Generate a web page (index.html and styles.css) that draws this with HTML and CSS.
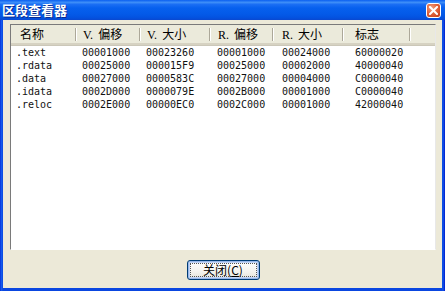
FILE: index.html
```html
<!DOCTYPE html>
<html lang="zh-CN">
<head>
<meta charset="utf-8">
<link rel="stylesheet" href="styles.css">
</head>
<body>
<div class="window">
  <div class="titlebar">
    <span class="title">区段查看器</span>
    <span class="close-btn"><svg width="9" height="9" viewBox="0 0 9 9"><path d="M1 1 L8 8 M8 1 L1 8" stroke="#fff" stroke-width="2" stroke-linecap="square"/></svg></span>
  </div>
  <div class="client">
    <div class="listview">
      <div class="header">
        <div class="hcell c1">名称</div>
        <div class="hcell"><span class="lat">V. </span>偏移</div>
        <div class="hcell"><span class="lat">V. </span>大小</div>
        <div class="hcell c4"><span class="lat">R. </span>偏移</div>
        <div class="hcell c5"><span class="lat">R. </span>大小</div>
        <div class="hcell c6">标志</div>
        <div class="hcell last"></div>
      </div>
      <div class="rows">
        <div class="row"><span class="c1">.text</span><span>00001000</span><span>00023260</span><span class="c4">00001000</span><span class="c5">00024000</span><span class="c6">60000020</span></div>
        <div class="row"><span class="c1">.rdata</span><span>00025000</span><span>000015F9</span><span class="c4">00025000</span><span class="c5">00002000</span><span class="c6">40000040</span></div>
        <div class="row"><span class="c1">.data</span><span>00027000</span><span>0000583C</span><span class="c4">00027000</span><span class="c5">00004000</span><span class="c6">C0000040</span></div>
        <div class="row"><span class="c1">.idata</span><span>0002D000</span><span>0000079E</span><span class="c4">0002B000</span><span class="c5">00001000</span><span class="c6">C0000040</span></div>
        <div class="row"><span class="c1">.reloc</span><span>0002E000</span><span>00000EC0</span><span class="c4">0002C000</span><span class="c5">00001000</span><span class="c6">42000040</span></div>
      </div>
    </div>
    <div class="footer">
      <button class="btn"><span class="focus">关闭(<u>C</u>)</span></button>
    </div>
  </div>
</div>
</body>
</html>
```
FILE: styles.css
```css
* { box-sizing: border-box; }
html, body { margin: 0; padding: 0; }
body { width: 445px; height: 291px; overflow: hidden; background: #fff; }

.window {
  width: 445px;
  height: 291px;
  display: flex;
  flex-direction: column;
  background: linear-gradient(to right, #0019cf 0, #1660f0 1px, #0a46e0 3px, #0a46e0 442px, #1258e8 443px, #0019cf 445px);
  padding: 0 3px 3px 3px;
}

.titlebar {
  height: 20px;
  margin: 0 -3px;
  padding: 0 4px 0 2px;
  display: flex;
  align-items: center;
  justify-content: space-between;
  background: linear-gradient(to bottom, #0a5ff0 0%, #3d8ef8 12%, #1a6ef4 22%, #0660ee 40%, #045ae8 70%, #0352e0 88%, #0a48d0 100%);
}

.title {
  color: #fff;
  font-family: "Noto Sans CJK SC", sans-serif;
  font-weight: bold;
  font-size: 13px;
  line-height: 20px;
  text-shadow: 1px 1px 0 #0a2a90;
}

.close-btn {
  width: 15px;
  height: 15px;
  border: 1px solid #fff;
  border-radius: 3px;
  background: radial-gradient(circle at 35% 30%, #f0a080 0%, #e2643c 45%, #c23a14 100%);
  display: flex;
  align-items: center;
  justify-content: center;
}

.client {
  flex: 1;
  background: #ece9d8;
  display: flex;
  flex-direction: column;
  padding: 4px 6px 8px 7px;
}

.listview {
  height: 226px;
  background: #fff;
  border: 1px solid;
  border-color: #7a7a7a #e8e8e8 #fff #7a7a7a;
  display: flex;
  flex-direction: column;
  overflow: hidden;
}

.header {
  height: 20px;
  display: grid;
  grid-template-columns: 65px 64px 70px 63px 70px 67px 1fr;
  background: #ebeadb;
  border-bottom: 2px solid #d6d2c2;
  box-shadow: 0 1px 0 #cbc7b8;
  font-family: "Noto Sans CJK SC", sans-serif;
  font-size: 12px;
  color: #000;
}

.hcell {
  position: relative;
  line-height: 18px;
  padding-left: 7px;
  white-space: nowrap;
}
.hcell::after {
  content: "";
  position: absolute;
  right: 0;
  top: 3px;
  bottom: 3px;
  width: 1px;
  background: #aca899;
  box-shadow: 1px 0 0 #fff;
}
.hcell.last::after { display: none; }
.hcell.c1 { padding-left: 9px; }
.hcell.c4 { padding-left: 8px; }
.hcell.c5 { padding-left: 9px; }
.hcell.c6 { padding-left: 12px; }

.lat {
  font-family: "Liberation Serif", serif;
  font-size: 12px;
  margin-right: 2px;
}

.rows {
  padding-top: 1px;
  font-family: "DejaVu Sans Mono", monospace;
  font-size: 10px;
  color: #111;
}

.row {
  height: 13px;
  line-height: 13px;
  display: grid;
  grid-template-columns: 65px 64px 70px 63px 70px 67px 1fr;
}
.row span { padding-left: 6px; white-space: nowrap; }
.row span.c1 { padding-left: 5px; }
.row span.c4 { padding-left: 7px; }
.row span.c5 { padding-left: 9px; }
.row span.c6 { padding-left: 12px; }

.footer {
  margin-top: 10px;
  display: flex;
  justify-content: center;
}

.btn {
  width: 73px;
  height: 20px;
  margin: 0;
  padding: 2px;
  border: 1px solid #003c74;
  border-radius: 3px;
  background: linear-gradient(to bottom, #ffffff 0%, #f4f3ee 60%, #e3e1d8 100%);
  box-shadow: inset 0 0 0 1px #98b8ea, inset 0 0 0 2px #c4d6f6;
  display: flex;
  align-items: stretch;
  justify-content: center;
  font-family: "Noto Sans CJK SC", sans-serif;
  font-size: 12px;
  color: #000;
}

.focus {
  flex: 1;
  border: 1px dotted #555;
  line-height: 12px;
  display: flex;
  align-items: center;
  justify-content: center;
}
```
